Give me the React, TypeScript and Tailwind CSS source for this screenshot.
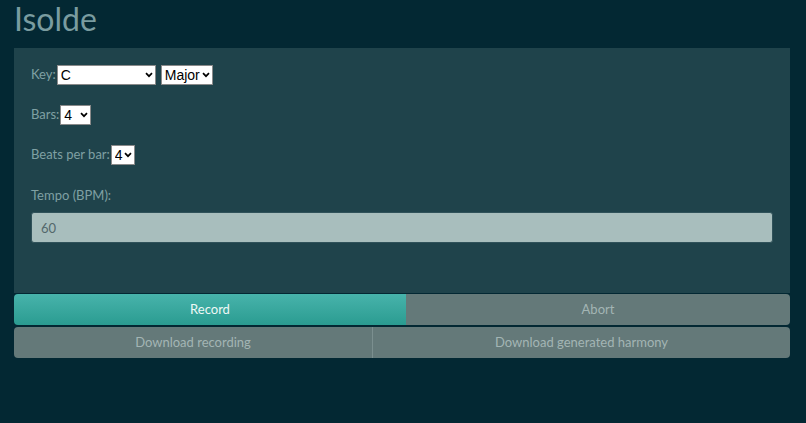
import React from 'react';

function Chevron() {
  return (
    <svg
      className="pointer-events-none absolute right-[3px] top-1/2 -translate-y-1/2"
      width="8"
      height="6"
      viewBox="0 0 8 6"
      fill="none"
    >
      <path d="M1 1.2l3 3 3-3" stroke="#000" strokeWidth="1.7" />
    </svg>
  );
}

function Select({ value, width }: { value: string; width: string }) {
  return (
    <div className={`relative h-[20px] ${width}`}>
      <select className="h-full w-full appearance-none border border-[#8a8a8a] bg-white pl-[3px] font-['Liberation_Sans',sans-serif] text-[14px] leading-[18px] text-black">
        <option>{value}</option>
      </select>
      <Chevron />
    </div>
  );
}

export default function App() {
  return (
    <div className="min-h-screen bg-[#032833] font-['Lato',sans-serif]">
      <div className="ml-[14px] w-[776px]">
        <h1 className="h-[48px] text-[32px] leading-[38px] text-[#7a9ca0]">Isolde</h1>

        <div className="bg-[#1f434b] px-[17px] pt-[17px] pb-[50px] text-[13px] text-[#7fa0a3]">
          <div className="flex h-[20px] items-center">
            <label>Key:</label>
            <div className="ml-[1px]">
              <Select value="C" width="w-[99px]" />
            </div>
            <div className="ml-[5px]">
              <Select value="Major" width="w-[52px]" />
            </div>
          </div>

          <div className="mt-[20px] flex h-[20px] items-center">
            <label>Bars:</label>
            <div className="ml-[1px]">
              <Select value="4" width="w-[31px]" />
            </div>
          </div>

          <div className="mt-[20px] flex h-[20px] items-center">
            <label>Beats per bar:</label>
            <div className="ml-[1px]">
              <Select value="4" width="w-[24px]" />
            </div>
          </div>

          <div className="mt-[20px] h-[27px] leading-[20px]">Tempo (BPM):</div>
          <input
            readOnly
            value="60"
            className="block h-[31px] w-full rounded-[3px] border border-[#30525a] bg-[#a8bebd] px-[9px] text-[13px] text-[#53686b]"
          />
        </div>

        <div className="mt-[1px] flex h-[31px] overflow-hidden rounded-[4px] text-[13px]">
          <button className="w-[392px] bg-gradient-to-b from-[#47b3ab] to-[#2a9c91] text-[#eef8f6]">Record</button>
          <button className="flex-1 bg-[#647979] text-[#a3b5b4]">Abort</button>
        </div>
        <div className="mt-[2px] flex h-[31px] overflow-hidden rounded-[4px] text-[13px] text-[#a3b5b4]">
          <button className="w-[359px] border-r border-[#7b8f8f] bg-[#647979]">Download recording</button>
          <button className="flex-1 bg-[#647979]">Download generated harmony</button>
        </div>
      </div>
    </div>
  );
}
